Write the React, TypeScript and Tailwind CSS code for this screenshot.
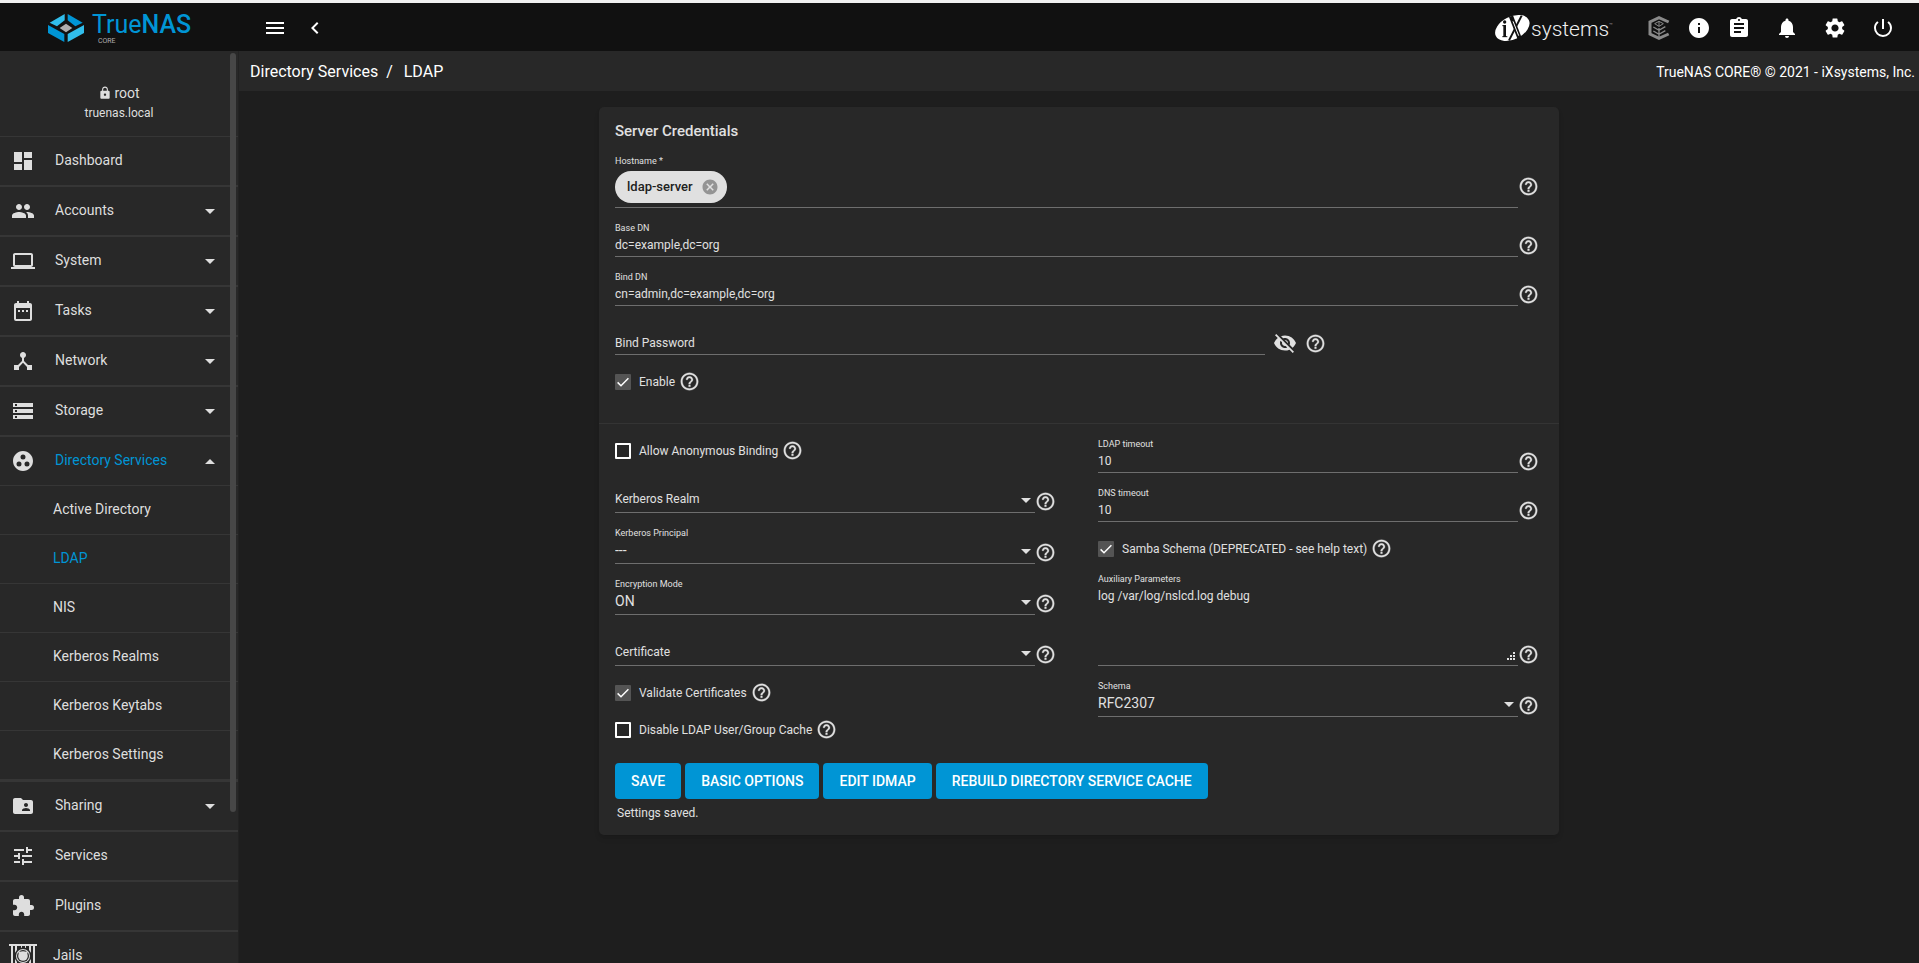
import { useId, useState } from 'react';
import type { ReactNode } from 'react';
import type { IconType } from 'react-icons';
import {
  MdAssignment,
  MdCancel,
  MdChevronLeft,
  MdDashboard,
  MdDateRange,
  MdDeviceHub,
  MdExtension,
  MdFolderShared,
  MdGroupWork,
  MdInfo,
  MdLaptop,
  MdLock,
  MdMenu,
  MdNotifications,
  MdPeople,
  MdPowerSettingsNew,
  MdSettings,
  MdStorage,
  MdTune,
  MdVisibilityOff,
} from 'react-icons/md';

/* ---------- drawings ---------- */

function Caret({ up = false, className = '' }: { up?: boolean; className?: string }) {
  return (
    <svg viewBox="0 0 10 5" className={`h-[5px] w-2.5 shrink-0 ${className}`} fill="currentColor" aria-hidden="true">
      <path d={up ? 'M0 5L5 0L10 5Z' : 'M0 0L5 5L10 0Z'} />
    </svg>
  );
}

function TrueNasMark() {
  return (
    <svg viewBox="0 0 108 84" className="h-7 w-9 shrink-0" aria-hidden="true">
      <path d="M50 0V19L27 37L5 26Z" fill="#31beec" />
      <path d="M59 0V19L82 37L104 26Z" fill="#0095d5" />
      <path d="M0 33L49 60V84L0 57Z" fill="#0095d5" />
      <path d="M108 33L59 60V84L108 57Z" fill="#31beec" />
      <path d="M54 29L73 42L54 55L35 42Z" fill="#aeadae" />
    </svg>
  );
}

function IxMark() {
  return (
    <svg viewBox="0 0 105 78" className="h-[26px] w-[35px] shrink-0" aria-hidden="true">
      <ellipse cx="52" cy="39" rx="55" ry="34" transform="rotate(-26 52 39)" fill="#fff" />
      <g fill="none" stroke="#111">
        <path d="M29 30V66" strokeWidth="8" />
        <path d="M22 32H30M22 65H37" strokeWidth="3" />
        <path d="M48 4L77 78" strokeWidth="13" />
        <path d="M80 2L42 76" strokeWidth="6" />
      </g>
      <path d="M54 19L71 62" stroke="#fff" strokeWidth="3" />
      <circle cx="29" cy="21" r="5" fill="#111" />
    </svg>
  );
}

function TrueCommandMark() {
  return (
    <svg viewBox="0 0 66 72" className="h-6 w-[22px]" fill="none" stroke="#8a8a8a" aria-hidden="true">
      <path d="M62 18L33 5L6 18V54L33 67L62 54" strokeWidth="9" />
      <path d="M33 16L46 23L33 31L20 23ZM33 16V31" strokeWidth="3" />
      <path d="M33 36V64M16 33L33 43L52 32M16 45L33 55L52 44" strokeWidth="4" />
    </svg>
  );
}

function JailIcon({ className = '' }: { className?: string }) {
  return (
    <svg viewBox="0 0 28 24" className={className} fill="currentColor" aria-hidden="true">
      <path d="M0 0H28V2H0ZM2 2H4V24H2ZM6 2H8V24H6ZM20 2H22V24H20ZM24 2H26V24H24ZM12 2H13V5H12ZM16 2H17V5H16Z" />
      <circle cx="14" cy="12" r="8.5" fill="#282828" />
      <circle cx="14" cy="12" r="7" />
      <circle cx="14" cy="12" r="6" fill="#282828" />
      <circle cx="14" cy="12" r="4.8" />
      <path d="M9 7L12.5 8L10 10.500ZM19 7L15.500 8L18 10.500Z" />
    </svg>
  );
}

function HelpIcon() {
  return (
    <svg
      viewBox="0 0 24 24"
      className="size-[21px]"
      fill="currentColor"
      stroke="currentColor"
      strokeWidth="0.3"
      aria-hidden="true"
    >
      <path d="M11 18h2v-2h-2v2zm1-16C6.480 2 2 6.480 2 12s4.480 10 10 10 10-4.480 10-10S17.520 2 12 2zm0 18c-4.410 0-8-3.590-8-8s3.590-8 8-8 8 3.590 8 8-3.590 8-8 8zm0-14c-2.210 0-4 1.790-4 4h2c0-1.100.9-2 2-2s2 .9 2 2c0 2-3 1.750-3 5h2c0-2.250 3-2.500 3-5 0-2.210-1.790-4-4-4z" />
    </svg>
  );
}

/* ---------- header ---------- */

function HeaderButton({ label, narrow = false, children }: { label: string; narrow?: boolean; children: ReactNode }) {
  return (
    <button
      type="button"
      aria-label={label}
      className={`flex h-10 items-center justify-center text-2xl text-white ${narrow ? 'w-10' : 'w-12'}`}
    >
      {children}
    </button>
  );
}

function Header() {
  return (
    <header className="flex h-12 shrink-0 items-center bg-[#111111] pt-0.5">
      <a href="#" className="flex w-[239px] items-center justify-center">
        <TrueNasMark />
        <span className="flex flex-col pl-2">
          <span className="text-[25px] leading-[26px] text-[#0095d5]">
            True<b className="font-medium">NAS</b>
          </span>
          <span className="pl-1.5 text-[7px] leading-[7px] text-[#aeadae]">CORE</span>
        </span>
      </a>
      <div className="flex items-center pl-4">
        <HeaderButton label="Toggle menu" narrow>
          <MdMenu />
        </HeaderButton>
        <HeaderButton label="Collapse menu" narrow>
          <MdChevronLeft />
        </HeaderButton>
      </div>
      <div className="ml-auto flex items-center pr-3">
        <a href="#" className="flex items-center pr-[26px]">
          <IxMark />
          <span className="pt-0.5 pl-px text-[21px] leading-6 font-light text-[#f0f0f0]">systems</span>
          <span className="self-start pt-1 text-[6px] leading-3 text-[#999999]">™</span>
        </a>
        <HeaderButton label="TrueCommand" narrow>
          <TrueCommandMark />
        </HeaderButton>
        <HeaderButton label="Information" narrow>
          <MdInfo />
        </HeaderButton>
        <HeaderButton label="Task manager" narrow>
          <MdAssignment />
        </HeaderButton>
        <div className="flex pl-1">
          <HeaderButton label="Notifications">
            <MdNotifications />
          </HeaderButton>
          <HeaderButton label="Settings">
            <MdSettings />
          </HeaderButton>
          <HeaderButton label="Power">
            <MdPowerSettingsNew />
          </HeaderButton>
        </div>
      </div>
    </header>
  );
}

/* ---------- sidebar ---------- */

type NavEntry = {
  label: string;
  icon: IconType | typeof JailIcon;
  wide?: boolean;
  expandable?: boolean;
  children?: string[];
};

const NAV: NavEntry[] = [
  { label: 'Dashboard', icon: MdDashboard },
  { label: 'Accounts', icon: MdPeople, expandable: true },
  { label: 'System', icon: MdLaptop, expandable: true },
  { label: 'Tasks', icon: MdDateRange, expandable: true },
  { label: 'Network', icon: MdDeviceHub, expandable: true },
  { label: 'Storage', icon: MdStorage, expandable: true },
  {
    label: 'Directory Services',
    icon: MdGroupWork,
    expandable: true,
    children: ['Active Directory', 'LDAP', 'NIS', 'Kerberos Realms', 'Kerberos Keytabs', 'Kerberos Settings'],
  },
  { label: 'Sharing', icon: MdFolderShared, expandable: true },
  { label: 'Services', icon: MdTune },
  { label: 'Plugins', icon: MdExtension },
  { label: 'Jails', icon: JailIcon, wide: true },
];

function Sidebar() {
  return (
    <aside className="relative w-[239px] shrink-0 overflow-hidden border-r border-[#222222] bg-[#282828] text-sm text-[#dedede]">
      <div className="flex h-[86px] flex-col items-center border-b border-[#363636] pt-8">
        <div className="flex h-5 items-center gap-0.5">
          <MdLock className="size-3.5" />
          root
        </div>
        <div className="text-xs leading-5">truenas.local</div>
      </div>
      <nav>
        <ul>
          {NAV.map(({ label, icon: Icon, wide, expandable, children }) => (
            <li key={label} className="border-b-2 border-[#363636]">
              <a href="#" className="flex h-12 items-center pr-[23px] pl-[9px]">
                <span className="flex w-7 justify-center">
                  <Icon className={wide ? 'h-6 w-7' : 'size-6'} />
                </span>
                <span
                  className={`flex-1 pb-0.5 ${wide ? 'pl-4' : 'pl-[18px]'} ${children ? 'text-[#0095d5]' : ''}`}
                >
                  {label}
                </span>
                {expandable && <Caret up={!!children} />}
              </a>
              {children && (
                <ul className="border-t border-[#363636]">
                  {children.map((child) => (
                    <li key={child} className="border-b border-[#363636]">
                      <a
                        href="#"
                        className={`flex h-12 items-center pb-0.5 pl-[53px] ${child === 'LDAP' ? 'text-[#0095d5]' : ''}`}
                      >
                        {child}
                      </a>
                    </li>
                  ))}
                </ul>
              )}
            </li>
          ))}
        </ul>
      </nav>
      <div className="absolute top-0.5 right-0.5 h-[759px] w-1.5 rounded-full bg-[#474747]" />
    </aside>
  );
}

/* ---------- form parts ---------- */

function Help() {
  return (
    <button type="button" aria-label="Help" className="shrink-0 pb-px text-[#e0e0e0]">
      <HelpIcon />
    </button>
  );
}

const LABEL = 'block h-3 text-[9px] leading-3 text-[#e0e0e0]';
const RULE = 'min-w-0 flex-1 border-b border-[#6e6e6e]';

function TextField({ label, value }: { label: string; value: string }) {
  const id = useId();
  return (
    <div className="flex items-end">
      <div className={RULE}>
        <label htmlFor={id} className={LABEL}>
          {label}
        </label>
        <input id={id} defaultValue={value} className="block h-[22px] w-full bg-transparent text-xs outline-none" />
      </div>
      <Help />
    </div>
  );
}

function SelectField({ label, value }: { label: string; value?: string }) {
  const id = useId();
  return (
    <div className="flex items-end">
      <div className={RULE}>
        {value && (
          <label htmlFor={id} className={LABEL}>
            {label}
          </label>
        )}
        <div className={`grid items-center ${value ? '' : 'pt-3'}`}>
          {!value && (
            <label htmlFor={id} className="pointer-events-none col-start-1 row-start-1 pb-0.5 text-xs leading-5">
              {label}
            </label>
          )}
          <select
            id={id}
            defaultValue={value ?? ''}
            className="col-start-1 row-start-1 h-6 w-full appearance-none bg-transparent pb-0.5 text-sm outline-none"
          >
            <option value={value ?? ''}>{value ?? ''}</option>
          </select>
          <Caret className="pointer-events-none col-start-1 row-start-1 mr-1 justify-self-end" />
        </div>
      </div>
      <Help />
    </div>
  );
}

function CheckField({ label, checked = false }: { label: string; checked?: boolean }) {
  const id = useId();
  const [on, setOn] = useState(checked);
  return (
    <div className="flex h-[26px] items-center">
      <span className="grid size-4">
        <input
          id={id}
          type="checkbox"
          checked={on}
          onChange={(e) => setOn(e.target.checked)}
          className="col-start-1 row-start-1 size-4 appearance-none rounded-[1px] border-2 border-white checked:border-0 checked:bg-[#545454]"
        />
        {on && (
          <svg viewBox="0 0 16 16" className="pointer-events-none col-start-1 row-start-1 size-4" aria-hidden="true">
            <path d="M2.600 8.400L6 11.700L13.400 4.300" fill="none" stroke="#fff" strokeWidth="1.500" />
          </svg>
        )}
      </span>
      <label htmlFor={id} className="pr-1 pl-2 text-xs leading-5">
        {label}
      </label>
      <Help />
    </div>
  );
}

function ActionButton({ children }: { children: ReactNode }) {
  return (
    <button type="button" className="h-9 rounded bg-[#0095d5] px-4 text-sm font-medium text-white uppercase">
      {children}
    </button>
  );
}

/* ---------- form ---------- */

function ServerCredentials() {
  return (
    <section className="pt-4 pr-5 pb-7 pl-4">
      <h2 className="text-[15px] leading-4 font-medium">Server Credentials</h2>
      <div className="mt-4 flex items-end">
        <div className={RULE}>
          <label htmlFor="hostname" className={LABEL}>
            Hostname *
          </label>
          <div className="flex items-center py-1">
            <span className="flex h-8 items-center gap-2 rounded-full bg-[#e0e0e0] pr-2 pl-3 text-[13px] font-medium text-[#212121]">
              ldap-server
              <button type="button" aria-label="Remove ldap-server" className="text-lg text-[#949494]">
                <MdCancel />
              </button>
            </span>
            <input id="hostname" className="h-8 min-w-0 flex-1 bg-transparent px-2 text-xs outline-none" />
          </div>
        </div>
        <div className="pb-1">
          <Help />
        </div>
      </div>
      <div className="mt-3.5 flex flex-col gap-3.5">
        <TextField label="Base DN" value="dc=example,dc=org" />
        <TextField label="Bind DN" value="cn=admin,dc=example,dc=org" />
        <div className="flex items-end">
          <div className="grid w-[650px] items-center border-b border-[#6e6e6e] pt-3">
            <label htmlFor="bind-password" className="pointer-events-none col-start-1 row-start-1 text-xs leading-5">
              Bind Password
            </label>
            <input
              id="bind-password"
              type="password"
              className="col-start-1 row-start-1 h-[22px] w-full bg-transparent text-xs outline-none"
            />
          </div>
          <button type="button" aria-label="Show password" className="px-2 text-2xl text-[#e0e0e0]">
            <MdVisibilityOff />
          </button>
          <Help />
        </div>
        <CheckField label="Enable" checked />
      </div>
    </section>
  );
}

function AdvancedOptions() {
  return (
    <section className="grid grid-cols-2 gap-x-[42px] border-t border-[#343434] pt-3.5 pr-5 pl-4">
      <div>
        <CheckField label="Allow Anonymous Binding" />
        <div className="mt-3 flex flex-col gap-3.5">
          <SelectField label="Kerberos Realm" />
          <SelectField label="Kerberos Principal" value="---" />
          <SelectField label="Encryption Mode" value="ON" />
          <SelectField label="Certificate" />
        </div>
        <div className="mt-3.5 flex flex-col gap-[11px]">
          <CheckField label="Validate Certificates" checked />
          <CheckField label="Disable LDAP User/Group Cache" />
        </div>
      </div>
      <div>
        <div className="flex flex-col gap-3.5">
          <TextField label="LDAP timeout" value="10" />
          <TextField label="DNS timeout" value="10" />
          <CheckField label="Samba Schema (DEPRECATED - see help text)" checked />
        </div>
        <div className="mt-[11px] flex flex-col gap-3.5">
          <div className="flex items-end">
            <div className={RULE}>
              <label htmlFor="aux" className={LABEL}>
                Auxiliary Parameters
              </label>
              <div className="grid">
                <textarea
                  id="aux"
                  defaultValue="log /var/log/nslcd.log debug"
                  className="col-start-1 row-start-1 block h-20 w-full resize-none bg-transparent text-xs leading-[22px] outline-none"
                />
                <svg
                  viewBox="0 0 8 8"
                  className="pointer-events-none col-start-1 row-start-1 mr-[3px] mb-[5px] size-2 self-end justify-self-end"
                  fill="#e0e0e0"
                  aria-hidden="true"
                >
                  <path d="M6 0H8V2H6ZM3 3H5V5H3ZM6 3H8V5H6ZM0 6H2V8H0ZM3 6H5V8H3ZM6 6H8V8H6Z" />
                </svg>
              </div>
            </div>
            <Help />
          </div>
          <SelectField label="Schema" value="RFC2307" />
        </div>
      </div>
    </section>
  );
}

export default function App() {
  return (
    <div className="flex h-screen flex-col overflow-hidden border-t-3 border-[#f0f0f0] bg-[#1e1e1e] font-[Roboto,sans-serif] text-[#e0e0e0]">
      <Header />
      <div className="flex min-h-0 flex-1">
        <Sidebar />
        <div className="flex min-w-0 flex-1 flex-col">
          <div className="flex h-10 shrink-0 items-center justify-between bg-[#282828] pt-0.5 pr-1 pl-[11px] text-white">
            <nav aria-label="Breadcrumb" className="flex items-center">
              <a href="#">Directory Services</a>
              <span className="pr-[11px] pl-2">/</span>
              <a href="#">LDAP</a>
            </nav>
            <span className="text-sm">TrueNAS CORE® © 2021 - iXsystems, Inc.</span>
          </div>
          <main className="min-h-0 flex-1 overflow-y-auto p-4">
            <form
              className="mx-auto max-w-[960px] rounded-[5px] bg-[#282828] shadow-md"
              onSubmit={(e) => e.preventDefault()}
            >
              <ServerCredentials />
              <AdvancedOptions />
              <div className="px-4 pt-5 pb-3">
                <div className="flex flex-wrap gap-1">
                  <ActionButton>Save</ActionButton>
                  <ActionButton>Basic Options</ActionButton>
                  <ActionButton>Edit Idmap</ActionButton>
                  <ActionButton>Rebuild Directory Service Cache</ActionButton>
                </div>
                <p className="mt-1 pl-0.5 text-xs leading-5">Settings saved.</p>
              </div>
            </form>
          </main>
        </div>
      </div>
    </div>
  );
}
